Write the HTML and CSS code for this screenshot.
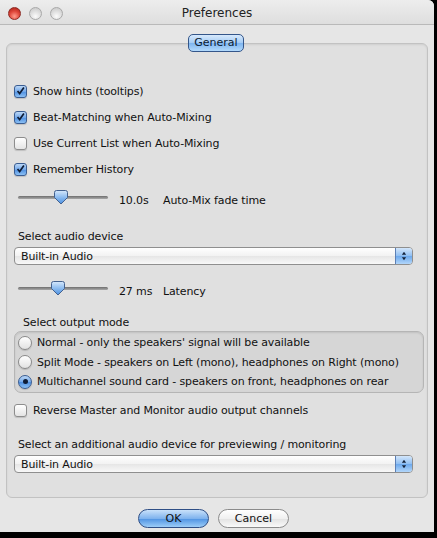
FILE: index.html
```html
<!DOCTYPE html>
<html lang="en">
<head>
    <meta charset="UTF-8">
    <title>Preferences</title>
    <link rel="stylesheet" href="styles.css">
</head>
<body>

<div class="window">
    <!-- Title bar -->
    <div class="titlebar">
        <div class="lights">
            <span class="light close"></span>
            <span class="light"></span>
            <span class="light"></span>
        </div>
        <div class="title">Preferences</div>
    </div>

    <div class="content">
        <div class="tabbox">
            <div class="tab">General</div>

            <div class="pane">
                <div class="check-row">
                    <span class="check on"><svg viewBox="0 0 13 13"><path d="M3 6.5 L5.5 9.5 L10.5 2.5" /></svg></span>
                    <span>Show hints (tooltips)</span>
                </div>
                <div class="check-row">
                    <span class="check on"><svg viewBox="0 0 13 13"><path d="M3 6.5 L5.5 9.5 L10.5 2.5" /></svg></span>
                    <span>Beat-Matching when Auto-Mixing</span>
                </div>
                <div class="check-row">
                    <span class="check"></span>
                    <span>Use Current List when Auto-Mixing</span>
                </div>
                <div class="check-row">
                    <span class="check on"><svg viewBox="0 0 13 13"><path d="M3 6.5 L5.5 9.5 L10.5 2.5" /></svg></span>
                    <span>Remember History</span>
                </div>

                <div class="slider-row fade">
                    <div class="slider">
                        <div class="track"></div>
                        <svg class="knob" style="left: 36px" viewBox="0 0 14 15"><defs><linearGradient id="kg1" x1="0" y1="0" x2="0" y2="1"><stop offset="0" stop-color="#d6e8fb"/><stop offset="0.5" stop-color="#8dbcf0"/><stop offset="1" stop-color="#4a8fe0"/></linearGradient></defs><path d="M2.5 0.5 H11.5 Q13.5 0.5 13.5 2.5 V7.5 L7 14 L0.5 7.5 V2.5 Q0.5 0.5 2.5 0.5 Z" fill="url(#kg1)" stroke="#43618f" stroke-width="1"/></svg>
                    </div>
                    <span class="value">10.0s</span>
                    <span>Auto-Mix fade time</span>
                </div>

                <div class="label first-label">Select audio device</div>
                <div class="popup">
                    <span>Built-in Audio</span>
                    <span class="arrows"><svg viewBox="0 0 7 11"><path d="M3.5 0.5 L6 4 H1 Z M3.5 10.5 L6 7 H1 Z" /></svg></span>
                </div>

                <div class="slider-row latency">
                    <div class="slider">
                        <div class="track"></div>
                        <svg class="knob" style="left: 33px" viewBox="0 0 14 15"><defs><linearGradient id="kg2" x1="0" y1="0" x2="0" y2="1"><stop offset="0" stop-color="#d6e8fb"/><stop offset="0.5" stop-color="#8dbcf0"/><stop offset="1" stop-color="#4a8fe0"/></linearGradient></defs><path d="M2.5 0.5 H11.5 Q13.5 0.5 13.5 2.5 V7.5 L7 14 L0.5 7.5 V2.5 Q0.5 0.5 2.5 0.5 Z" fill="url(#kg2)" stroke="#43618f" stroke-width="1"/></svg>
                    </div>
                    <span class="value">27 ms</span>
                    <span>Latency</span>
                </div>

                <div class="label mode-label">Select output mode</div>
                <div class="radio-group">
                    <div class="radio-row">
                        <span class="radio"></span>
                        <span>Normal - only the speakers' signal will be available</span>
                    </div>
                    <div class="radio-row">
                        <span class="radio"></span>
                        <span>Split Mode - speakers on Left (mono), headphones on Right (mono)</span>
                    </div>
                    <div class="radio-row">
                        <span class="radio on"></span>
                        <span>Multichannel sound card - speakers on front, headphones on rear</span>
                    </div>
                </div>

                <div class="check-row reverse">
                    <span class="check"></span>
                    <span>Reverse Master and Monitor audio output channels</span>
                </div>

                <div class="label monitor-label">Select an additional audio device for previewing / monitoring</div>
                <div class="popup">
                    <span>Built-in Audio</span>
                    <span class="arrows"><svg viewBox="0 0 7 11"><path d="M3.5 0.5 L6 4 H1 Z M3.5 10.5 L6 7 H1 Z" /></svg></span>
                </div>
            </div>
        </div>

        <!-- Dialog buttons -->
        <div class="buttons">
            <button class="btn default">OK</button>
            <button class="btn">Cancel</button>
        </div>
    </div>
</div>

</body>
</html>
```

FILE: styles.css
```css
body {
    margin: 0;
    background-color: #000;
    font-family: "DejaVu Sans", "Liberation Sans", sans-serif;
    font-size: 11px;
    letter-spacing: -0.13px;
    color: #111;
}
.window {
    width: 434px;
    height: 532px;
    background-color: #e6e6e6;
    border-top-right-radius: 6px;
    overflow: hidden;
    display: flex;
    flex-direction: column;
}
.titlebar {
    height: 24px;
    border-bottom: 1px solid #b9b9b9;
    background: linear-gradient(#ededed, #dedede);
    position: relative;
    display: flex;
    align-items: center;
    justify-content: center;
}
.lights {
    position: absolute;
    left: 8px;
    top: 7px;
    display: flex;
    gap: 8px;
}
.light {
    width: 13px;
    height: 13px;
    border-radius: 50%;
    border: 1px solid #a9a9a9;
    box-sizing: border-box;
    background: radial-gradient(circle at 50% 75%, #fbfbfb 0%, #dcdcdc 55%, #c4c4c4 100%);
}
.light.close {
    border-color: #8e2a24;
    background: radial-gradient(circle at 50% 75%, #ff9c8c 0%, #e0473a 50%, #a51d14 100%);
}
.title {
    font-size: 12px;
    letter-spacing: 0;
    color: #222;
    margin-top: 2px;
}
.content {
    flex: 1;
    display: flex;
    flex-direction: column;
}
.tabbox {
    margin: 18px 6px 0 6px;
    height: 455px;
    box-sizing: border-box;
    border: 1px solid #c2c2c2;
    border-radius: 6px;
    background-color: #e0e0e0;
    box-shadow: inset 0 1px 2px rgba(0, 0, 0, 0.08);
}
.tab {
    width: 56px;
    height: 18px;
    box-sizing: border-box;
    margin: -10px auto 0 auto;
    border: 1px solid #34568a;
    border-radius: 5px;
    background: linear-gradient(#d7e9fc 0%, #a3cbf4 50%, #7db4ef 51%, #b3dafc 100%);
    text-align: center;
    line-height: 16px;
    font-size: 11px;
    letter-spacing: 0;
    color: #0a1a33;
    position: relative;
    left: -1px;
}
.pane {
    padding: 26px 0 0 7px;
}
.check-row {
    height: 26px;
    display: flex;
    align-items: center;
    gap: 6px;
}
.check {
    width: 13px;
    height: 13px;
    box-sizing: border-box;
    border: 1px solid #8d8d8d;
    border-radius: 3px;
    background: linear-gradient(#ffffff, #e4e4e4);
    box-shadow: 0 1px 1px rgba(0, 0, 0, 0.15);
    display: inline-flex;
}
.check.on {
    border-color: #3a5d92;
    background: linear-gradient(#bcd8f7 0%, #74a9ea 50%, #4d8ee0 51%, #8cc0f4 100%);
}
.check svg {
    width: 12px;
    height: 12px;
    margin: -1px 0 0 0;
}
.check path {
    fill: none;
    stroke: #0f1d36;
    stroke-width: 2;
}
.slider-row {
    height: 26px;
    margin-top: 5px;
    display: flex;
    align-items: center;
}
.slider {
    width: 90px;
    height: 20px;
    margin-left: 4px;
    position: relative;
}
.track {
    position: absolute;
    left: 0;
    right: 0;
    top: 6px;
    height: 3px;
    border-radius: 2px;
    background: linear-gradient(#6e6e6e, #a9a9a9);
}
.knob {
    position: absolute;
    top: 0;
    width: 14px;
    height: 15px;
}
.value {
    margin-left: 11px;
    width: 44px;
}
.label {
    height: 14px;
    line-height: 14px;
    margin-left: 4px;
}
.first-label {
    margin-top: 17px;
}
.popup {
    width: 399px;
    height: 18px;
    box-sizing: border-box;
    margin-top: 3px;
    border: 1px solid #8f8f8f;
    border-radius: 4px;
    background: linear-gradient(#ffffff 0%, #f2f2f2 50%, #e6e6e6 51%, #f8f8f8 100%);
    display: flex;
    align-items: center;
    justify-content: space-between;
    padding-left: 6px;
    overflow: hidden;
}
.arrows {
    width: 16px;
    height: 16px;
    border-left: 1px solid #5b7fb5;
    background: linear-gradient(#d3e6fb 0%, #8fbef2 50%, #6ca8ec 51%, #b2d6fa 100%);
    display: flex;
    align-items: center;
    justify-content: center;
}
.arrows svg {
    width: 6px;
    height: 10px;
}
.arrows path {
    fill: #15233b;
}
.latency {
    margin-top: 13px;
}
.mode-label {
    margin-top: 12px;
    margin-left: 9px;
}
.radio-group {
    width: 410px;
    height: 62px;
    box-sizing: border-box;
    margin-top: 1px;
    border: 1px solid #b5b5b5;
    border-radius: 7px;
    background-color: #d6d6d6;
    box-shadow: inset 0 1px 2px rgba(0, 0, 0, 0.1);
    padding: 1px 0 0 3px;
}
.radio-row {
    height: 19.5px;
    display: flex;
    align-items: center;
    gap: 5px;
}
.radio {
    width: 14px;
    height: 14px;
    box-sizing: border-box;
    border-radius: 50%;
    border: 1px solid #8a8a8a;
    background: linear-gradient(#ffffff, #e2e2e2);
    box-shadow: 0 1px 1px rgba(0, 0, 0, 0.15);
    display: inline-flex;
    align-items: center;
    justify-content: center;
}
.radio.on {
    border-color: #3a5d92;
    background: linear-gradient(#bcd8f7 0%, #74a9ea 50%, #4d8ee0 51%, #8cc0f4 100%);
}
.radio.on::after {
    content: "";
    width: 5px;
    height: 5px;
    border-radius: 50%;
    background-color: #0f1d36;
}
.reverse {
    margin-top: 4px;
}
.monitor-label {
    margin-top: 15px;
}
.buttons {
    display: flex;
    justify-content: center;
    gap: 9px;
    margin-top: 11px;
    padding-right: 7px;
}
.btn {
    width: 71px;
    height: 19px;
    padding: 0;
    border-radius: 10px;
    border: 1px solid #8b8b8b;
    background: linear-gradient(#ffffff 0%, #f0f0f0 50%, #e2e2e2 51%, #fafafa 100%);
    font-family: "DejaVu Sans", "Liberation Sans", sans-serif;
    font-size: 11px;
    color: #111;
}
.btn.default {
    border-color: #2f4f86;
    background: linear-gradient(#c9e1fa 0%, #7fb3ee 50%, #4e92e2 51%, #9ccdf8 100%);
}
```
